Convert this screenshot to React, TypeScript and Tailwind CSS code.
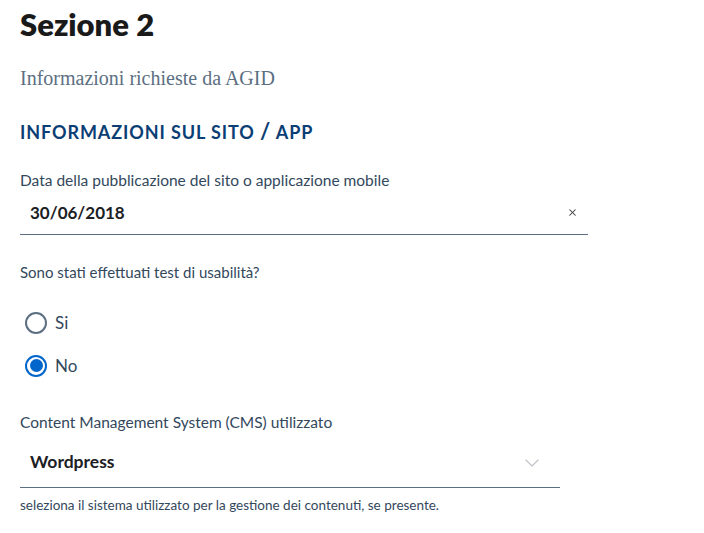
import { X, ChevronDown } from "lucide-react";

const sans = "font-['Lato','Liberation_Sans',sans-serif]";

export default function App() {
  return (
    <div className={`w-[704px] h-[533px] bg-white px-5 ${sans} text-[#33485c]`}>
      <h2 className="pt-[4px] text-[31px] leading-[40px] font-extrabold text-[#1a1a1a]">Sezione 2</h2>

      <p className="mt-[22px] font-['Liberation_Serif',serif] text-[20px] leading-[24px] text-[#5c6f82]">
        Informazioni richieste da AGID
      </p>

      <h3 className="mt-[29px] text-[18px] leading-[24px] font-bold tracking-[0.05em] text-[#0b3e74]">
        INFORMAZIONI SUL SITO <span className="text-[22px]">/</span> APP
      </h3>

      {/* data pubblicazione */}
      <div className="mt-[26px] w-[568px]">
        <label className="block text-[15.5px] leading-[20px]">
          Data della pubblicazione del sito o applicazione mobile
        </label>
        <div className="mt-[1px] flex items-center justify-between h-[44px] border-b border-[#5c6f82] pl-[10px] pr-[10px]">
          <span className="text-[17px] font-bold text-[#1c2024]">30/06/2018</span>
          <X size={11} strokeWidth={2.2} className="text-[#3a3a3a]" />
        </div>
      </div>

      {/* test usabilità */}
      <div className="mt-[27px]">
        <p className="text-[15px] leading-[20px]">Sono stati effettuati test di usabilità?</p>
        <div className="mt-[29px] flex flex-col gap-[20px] pl-[5px]">
          <label className="flex items-center gap-[8px] h-[23px]">
            <span className="w-[22px] h-[22px] rounded-full border-2 border-[#5c6f82]" />
            <span className="text-[17px] text-[#33485c]">Si</span>
          </label>
          <label className="flex items-center gap-[8px] h-[23px]">
            <span className="w-[22px] h-[22px] rounded-full border-2 border-[#0066cc] flex items-center justify-center">
              <span className="w-[13px] h-[13px] rounded-full bg-[#0066cc]" />
            </span>
            <span className="text-[17px] text-[#33485c]">No</span>
          </label>
        </div>
      </div>

      {/* CMS */}
      <div className="mt-[35px] w-[540px]">
        <label className="block text-[15.5px] leading-[20px]">Content Management System (CMS) utilizzato</label>
        <div className="mt-[6px] flex items-center justify-between h-[50px] border-b border-[#5c6f82] pl-[10px] pr-[16px]">
          <span className="text-[17.5px] font-bold text-[#1c2024]">Wordpress</span>
          <ChevronDown size={24} strokeWidth={1.2} className="text-[#c0c4c8]" />
        </div>
        <p className="mt-[9px] text-[13.5px] leading-[16px] text-[#33485c]">
          seleziona il sistema utilizzato per la gestione dei contenuti, se presente.
        </p>
      </div>
    </div>
  );
}
